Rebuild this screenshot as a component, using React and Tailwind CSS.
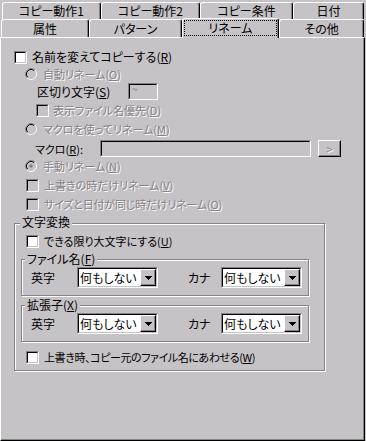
import React from 'react';

// win9x look: face #c6c3c6, shadow #848284
const DIS = 'text-[#848284] [text-shadow:1px_1px_0_#fff]';
const FONT = "font-['Noto_Sans_CJK_JP',sans-serif] [font-feature-settings:'palt'] text-[11px] leading-[14px]";

// label with mnemonic letter, e.g. 名前(R)
const Mn = ({ pre, k, post = '' }) => (
    <span className="whitespace-nowrap">
        {pre}(<span className="underline underline-offset-1">{k}</span>){post}
    </span>
);

const CheckBox = ({ disabled }) => (
    <span className="block w-[13px] h-[13px] shrink-0 border border-t-[#848284] border-l-[#848284] border-r-white border-b-white">
        <span className={`block w-full h-full border border-t-black border-l-black border-r-[#c6c3c6] border-b-[#c6c3c6] ${disabled ? 'bg-[#c6c3c6]' : 'bg-white'}`} />
    </span>
);

const Radio = ({ checked }) => (
    <svg width="12" height="12" viewBox="0 0 12 12" className="shrink-0">
        <circle cx="6" cy="6" r="4.5" fill="#c6c3c6" />
        <path d="M2.11 9.89A5.5 5.5 0 0 1 9.89 2.11" stroke="#848284" fill="none" />
        <path d="M9.89 2.11A5.5 5.5 0 0 1 2.11 9.89" stroke="#fff" fill="none" />
        <path d="M2.82 9.18A4.5 4.5 0 0 1 9.18 2.82" stroke="#000" fill="none" />
        <path d="M9.18 2.82A4.5 4.5 0 0 1 2.82 9.18" stroke="#c6c3c6" fill="none" />
        {checked && <circle cx="6" cy="6" r="1.8" fill="#848284" />}
    </svg>
);

// sunken 2px frame used for edits and combo boxes
const Sunken = ({ className, inner, children }) => (
    <div className={`border border-t-[#848284] border-l-[#848284] border-r-white border-b-white ${className}`}>
        <div className={`w-full h-full border border-t-black border-l-black border-r-[#c6c3c6] border-b-[#c6c3c6] ${inner}`}>
            {children}
        </div>
    </div>
);

const Combo = ({ value }) => (
    <Sunken className="w-[81px] h-[21px]" inner="bg-white flex items-center">
        <span className="flex-1 pl-[1px] text-[12px] text-black">{value}</span>
        <span className="w-[16px] h-[17px] flex items-center justify-center border border-t-white border-l-white border-r-black border-b-black shadow-[inset_-1px_-1px_#848284] bg-[#c6c3c6]">
            <svg width="7" height="4" viewBox="0 0 7 4">
                <path d="M0 0h7v1H0zM1 1h5v1H1zM2 2h3v1H2zM3 3h1v1H3z" fill="#000" />
            </svg>
        </span>
    </Sunken>
);

const Tab = ({ label, w, selected }) => (
    <div
        className={`${w} flex text-[12px] border-t border-l border-r border-t-white border-l-white border-r-black rounded-t-[3px] shadow-[inset_-1px_0_#848284] bg-[#c6c3c6] ${
            selected ? 'relative z-10 -mt-px h-[20px] px-[1px] pt-[1px]' : 'h-full items-center justify-center'
        }`}
    >
        {selected ? (
            <span className="flex-1 h-[16px] flex items-center justify-center border border-dotted border-black">{label}</span>
        ) : (
            label
        )}
    </div>
);

const Row = ({ className, children }) => <div className={`flex items-center h-[16px] ${className}`}>{children}</div>;

export default function App() {
    return (
        <div className={`w-[366px] h-[441px] bg-[#c6c3c6] text-black ${FONT}`}>
            {/* ===== TABS ===== */}
            <div className="flex h-[19px] pt-[2px] pl-[2px]">
                <Tab label="コピー動作1" w="w-[99px]" />
                <Tab label="コピー動作2" w="w-[99px]" />
                <Tab label="コピー条件" w="w-[93px]" />
                <Tab label="日付" w="w-[71px]" />
            </div>
            <div className="flex items-start h-[18px] pl-[1px]">
                <Tab label="属性" w="w-[88px]" />
                <Tab label="パターン" w="w-[93px]" />
                <Tab label="リネーム" w="w-[97px]" selected />
                <Tab label="その他" w="w-[85px]" />
            </div>

            {/* ===== PAGE ===== */}
            <div className="h-[404px] w-[365px] border border-t-white border-l-white border-r-black border-b-black shadow-[inset_-1px_-1px_#848284] flex flex-col">
                <Row className="mt-[11px] pl-[13px] gap-[5px] text-[12px]">
                    <CheckBox />
                    <Mn pre="名前を変えてコピーする" k="R" />
                </Row>
                <Row className={`mt-[1px] pl-[24px] gap-[6px] ${DIS}`}>
                    <Radio />
                    <Mn pre="自動リネーム" k="O" />
                </Row>
                <div className="mt-[1px] h-[17px] flex items-center pl-[36px]">
                    <span className="w-[91px] text-[12px]">
                        <Mn pre="区切り文字" k="S" />
                    </span>
                    <Sunken className="w-[30px] h-[17px]" inner="bg-[#c6c3c6] pl-[2px] leading-[8px] text-[10px] text-[#848284]">
                        ~
                    </Sunken>
                </div>
                <Row className={`mt-[2px] pl-[35px] gap-[4px] ${DIS}`}>
                    <CheckBox disabled />
                    <Mn pre="表示ファイル名優先" k="D" />
                </Row>
                <Row className={`mt-[3px] pl-[24px] gap-[6px] ${DIS}`}>
                    <Radio />
                    <Mn pre="マクロを使ってリネーム" k="M" />
                </Row>
                <div className="mt-[3px] h-[17px] flex items-center pl-[34px]">
                    <span className="w-[65px]">
                        <Mn pre="マクロ" k="R" post=":" />
                    </span>
                    <Sunken className="w-[211px] h-[17px]" inner="bg-[#c6c3c6]" />
                    <div className={`ml-[7px] w-[23px] h-[17px] flex items-center justify-center border border-t-white border-l-white border-r-black border-b-black shadow-[inset_-1px_-1px_#848284] ${DIS}`}>
                        &gt;
                    </div>
                </div>
                <Row className={`mt-[1px] pl-[24px] gap-[6px] ${DIS}`}>
                    <Radio checked />
                    <Mn pre="手動リネーム" k="N" />
                </Row>
                <Row className={`mt-[3px] pl-[25px] gap-[5px] ${DIS}`}>
                    <CheckBox disabled />
                    <Mn pre="上書きの時だけリネーム" k="V" />
                </Row>
                <Row className={`mt-[3px] pl-[25px] gap-[5px] tracking-[-0.2px] ${DIS}`}>
                    <CheckBox disabled />
                    <Mn pre="サイズと日付が同じ時だけリネーム" k="O" />
                </Row>

                {/* ===== 文字変換 GROUP ===== */}
                <div className="mt-[11px] ml-[13px] w-[311px] h-[148px] border border-[#848284] shadow-[inset_1px_1px_#fff,1px_1px_#fff] flex flex-col">
                    <span className="-mt-[9px] ml-[5px] px-[2px] w-fit bg-[#c6c3c6] text-[12px]">文字変換</span>
                    <Row className="mt-[4px] pl-[11px] gap-[5px]">
                        <CheckBox />
                        <Mn pre="できる限り大文字にする" k="U" />
                    </Row>

                    <div className="mt-[10px] ml-[6px] w-[288px] h-[37px] border border-[#848284] shadow-[inset_1px_1px_#fff,1px_1px_#fff] flex flex-col">
                        <span className="-mt-[8px] ml-[3px] px-[2px] w-fit bg-[#c6c3c6] text-[12px]">
                            <Mn pre="ファイル名" k="F" />
                        </span>
                        <div className="mt-[1px] flex items-center pl-[9px] text-[12px]">
                            <span className="w-[46px]">英字</span>
                            <Combo value="何もしない" />
                            <span className="ml-[30px] w-[33px]">カナ</span>
                            <Combo value="何もしない" />
                        </div>
                    </div>

                    <div className="mt-[9px] ml-[6px] w-[288px] h-[37px] border border-[#848284] shadow-[inset_1px_1px_#fff,1px_1px_#fff] flex flex-col">
                        <span className="-mt-[8px] ml-[3px] px-[2px] w-fit bg-[#c6c3c6] text-[12px]">
                            <Mn pre="拡張子" k="X" />
                        </span>
                        <div className="mt-[1px] flex items-center pl-[9px] text-[12px]">
                            <span className="w-[46px]">英字</span>
                            <Combo value="何もしない" />
                            <span className="ml-[30px] w-[33px]">カナ</span>
                            <Combo value="何もしない" />
                        </div>
                    </div>

                    <Row className="mt-[7px] pl-[11px] gap-[5px] tracking-[-0.4px]">
                        <CheckBox />
                        <Mn pre="上書き時、コピー元のファイル名にあわせる" k="W" />
                    </Row>
                </div>
            </div>
        </div>
    );
}
